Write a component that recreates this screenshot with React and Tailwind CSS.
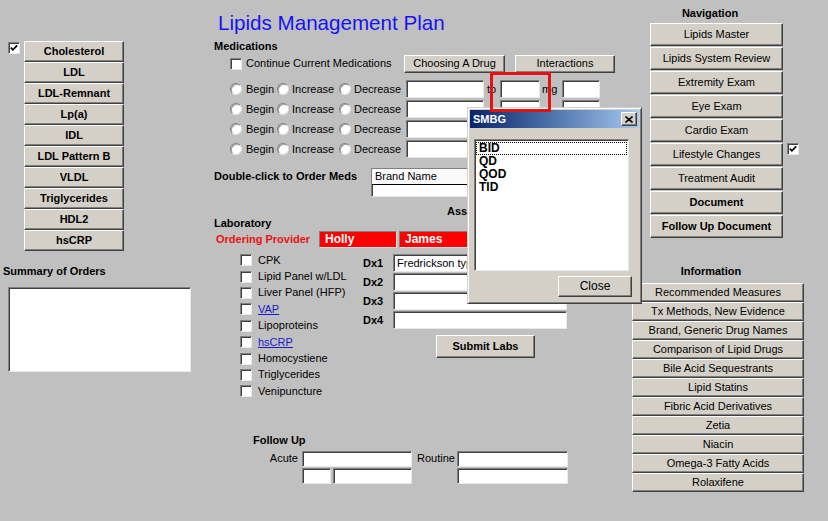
import React from "react";

const btn =
  "bg-[#d4d0c8] border border-t-white border-l-white border-r-[#404040] border-b-[#404040] shadow-[inset_-1px_-1px_0_#808080] flex items-center justify-center text-black shrink-0";
const sunken =
  "bg-white border border-t-[#808080] border-l-[#808080] border-r-[#e8e8e8] border-b-[#e8e8e8] shadow-[inset_1px_1px_0_#404040] shrink-0";

function Check({ checked }) {
  return (
    <span className={"inline-flex w-[12px] h-[12px] items-center justify-center " + sunken}>
      {checked && (
        <svg width="8" height="8" viewBox="0 0 8 8">
          <path d="M0.8 3.6 L2.9 5.8 L7.2 1.3" stroke="black" strokeWidth="1.7" fill="none" />
        </svg>
      )}
    </span>
  );
}

function Radio() {
  return (
    <span className="w-[12px] h-[12px] rounded-full bg-white border border-t-[#808080] border-l-[#808080] border-r-[#e0e0e0] border-b-[#e0e0e0] shadow-[inset_1px_1px_0_#a0a0a0] shrink-0" />
  );
}

const leftBtns = ["Cholesterol", "LDL", "LDL-Remnant", "Lp(a)", "IDL", "LDL Pattern B", "VLDL", "Triglycerides", "HDL2", "hsCRP"];
const navBtns = [
  { t: "Lipids Master" },
  { t: "Lipids System Review" },
  { t: "Extremity Exam" },
  { t: "Eye Exam" },
  { t: "Cardio Exam" },
  { t: "Lifestyle Changes", c: true },
  { t: "Treatment Audit" },
  { t: "Document", b: true },
  { t: "Follow Up Document", b: true },
];
const infoBtns = [
  "Recommended Measures",
  "Tx Methods, New Evidence",
  "Brand, Generic Drug Names",
  "Comparison of Lipid Drugs",
  "Bile Acid Sequestrants",
  "Lipid Statins",
  "Fibric Acid Derivatives",
  "Zetia",
  "Niacin",
  "Omega-3 Fatty Acids",
  "Rolaxifene",
];
const labs = [
  { t: "CPK" },
  { t: "Lipid Panel w/LDL" },
  { t: "Liver Panel (HFP)" },
  { t: "VAP", l: true },
  { t: "Lipoproteins" },
  { t: "hsCRP", l: true },
  { t: "Homocystiene" },
  { t: "Triglycerides" },
  { t: "Venipuncture" },
];

export default function App() {
  return (
    <div className="relative w-[828px] h-[521px] overflow-hidden bg-[#c0c0c0] flex font-['Liberation_Sans',Arial,sans-serif] text-[11px] leading-[13px] text-black">
      {/* Left column */}
      <div className="w-[200px] flex flex-col shrink-0">
        <div className="mt-[41px] flex items-start">
          <span className="ml-[8px] mt-[1px]">
            <Check checked />
          </span>
          <div className="ml-[4px] flex flex-col">
            {leftBtns.map((b) => (
              <div key={b} className={btn + " w-[100px] h-[21px] font-bold"}>
                {b}
              </div>
            ))}
          </div>
        </div>
        <div className="mt-[14px] ml-[3px] font-bold">Summary of Orders</div>
        <div className={sunken + " mt-[9px] ml-[8px] w-[183px] h-[85px]"} />
      </div>

      {/* Center column */}
      <div className="w-[432px] flex flex-col shrink-0">
        <div className="mt-[11px] ml-[18px] text-[20.6px] leading-[24px] text-[#1414f5]">Lipids Management Plan</div>
        <div className="mt-[5px] ml-[14px] font-bold">Medications</div>
        <div className="mt-[1px] h-[19px] flex items-center">
          <span className="ml-[30px] flex">
            <Check />
          </span>
          <span className="ml-[4px] w-[158px]">Continue Current Medications</span>
          <div className={btn + " w-[101px] h-[18px]"}>Choosing A Drug</div>
          <div className={btn + " ml-[10px] w-[100px] h-[18px]"}>Interactions</div>
        </div>
        <div className="mt-[7px] flex flex-col gap-[2px]">
          {[0, 1, 2, 3].map((i) => (
            <div key={i} className="h-[18px] flex items-center">
              <span className="ml-[30px] flex">
                <Radio />
              </span>
              <span className="ml-[4px] w-[31px]">Begin</span>
              <Radio />
              <span className="ml-[3px] w-[47px]">Increase</span>
              <Radio />
              <span className="ml-[3px] w-[52px]">Decrease</span>
              <div className={sunken + " w-[78px] h-[18px]"} />
              <span className="w-[16px] pl-[3px]">{i === 0 ? "to" : ""}</span>
              <div className={sunken + " w-[40px] h-[18px]"} />
              <span className="w-[22px] pl-[2px]">{i === 0 ? "mg" : ""}</span>
              <div className={sunken + " w-[38px] h-[18px]"} />
            </div>
          ))}
        </div>
        <div className="mt-[10px] h-[29px] flex items-start">
          <span className="ml-[14px] w-[157px] pt-[2px] font-bold">Double-click to Order Meds</span>
          <div className={sunken + " w-[229px] h-[29px] flex flex-col"}>
            <div className="h-[16px] border-b border-black bg-[#fafafa] pl-[3px] flex items-center">Brand Name</div>
          </div>
        </div>
        <div className="mt-[8px] flex items-start">
          <span className="ml-[14px] w-[233px] mt-[12px] font-bold">Laboratory</span>
          <span className="font-bold">Assessment</span>
        </div>
        <div className="mt-[1px] h-[17px] flex items-center">
          <span className="ml-[16px] w-[103px] font-bold text-[#ee1111]">Ordering Provider</span>
          <div className="w-[78px] h-[17px] bg-[#ff0000] border border-t-[#808080] border-l-[#808080] border-r-[#e0e0e0] border-b-[#e0e0e0] pl-[5px] flex items-center text-white font-bold text-[12px]">
            Holly
          </div>
          <div className="ml-[2px] w-[90px] h-[17px] bg-[#ff0000] border border-t-[#808080] border-l-[#808080] border-r-[#e0e0e0] border-b-[#e0e0e0] pl-[5px] flex items-center text-white font-bold text-[12px]">
            James
          </div>
        </div>
        <div className="mt-[4px] flex items-start">
          <div className="ml-[40px] w-[123px] flex flex-col">
            {labs.map((l) => (
              <div key={l.t} className="h-[16.4px] flex items-center">
                <Check />
                <span className={"ml-[6px] " + (l.l ? "text-[#1a1acc] underline" : "")}>{l.t}</span>
              </div>
            ))}
          </div>
          <div className="flex flex-col pt-[1.5px]">
            {["Dx1", "Dx2", "Dx3", "Dx4"].map((d, i) => (
              <div key={d} className="h-[19px] flex items-center">
                <span className="w-[30px] font-bold">{d}</span>
                <div className={sunken + " w-[174px] h-[18px] pl-[3px] flex items-center"}>
                  {i === 0 ? "Fredrickson type IIa" : ""}
                </div>
              </div>
            ))}
            <div className={btn + " mt-[5px] ml-[73px] w-[99px] h-[23px] font-bold"}>Submit Labs</div>
          </div>
        </div>
        <div className="mt-[34px] ml-[53px] font-bold">Follow Up</div>
        <div className="mt-[4px] h-[16px] flex items-center">
          <span className="w-[102px] pr-[4px] text-right">Acute</span>
          <div className={sunken + " w-[110px] h-[16px]"} />
          <span className="w-[45px] pl-[5px]">Routine</span>
          <div className={sunken + " w-[111px] h-[16px]"} />
        </div>
        <div className="mt-[1px] h-[16px] flex items-center">
          <span className="w-[102px]" />
          <div className={sunken + " w-[29px] h-[16px]"} />
          <div className={sunken + " ml-[2px] w-[79px] h-[16px]"} />
          <span className="w-[45px]" />
          <div className={sunken + " w-[111px] h-[16px]"} />
        </div>
      </div>

      {/* Right column */}
      <div className="w-[196px] flex flex-col shrink-0">
        <div className="mt-[7px] ml-[18px] w-[120px] text-center font-bold">Navigation</div>
        <div className="mt-[3px] ml-[18px] flex flex-col gap-[1px]">
          {navBtns.map((n) => (
            <div key={n.t} className="flex items-start">
              <div className={btn + " w-[133px] h-[23px] " + (n.b ? "font-bold" : "")}>{n.t}</div>
              {n.c && (
                <span className="ml-[4px] flex">
                  <Check checked />
                </span>
              )}
            </div>
          ))}
        </div>
        <div className="mt-[27px] w-[158px] text-center font-bold">Information</div>
        <div className="mt-[5px] flex flex-col">
          {infoBtns.map((b) => (
            <div key={b} className={btn + " w-[172px] h-[19px]"}>
              {b}
            </div>
          ))}
        </div>
      </div>

      {/* Red highlight overlay */}
      <div className="absolute left-[490px] top-[72px] w-[61px] h-[40px] border-[3px] border-[#e51212] z-20" />

      {/* SMBG dialog */}
      <div className="absolute left-[467px] top-[107px] w-[175px] h-[197px] bg-[#d4d0c8] border border-t-[#d4d0c8] border-l-[#d4d0c8] border-r-[#404040] border-b-[#404040] shadow-[inset_1px_1px_0_white,inset_-1px_-1px_0_#808080] p-[2px] z-10 flex flex-col">
        <div className="h-[18px] bg-linear-to-r from-[#0a246a] to-[#a6caf0] flex items-center justify-between pl-[3px] pr-[2px]">
          <span className="text-white font-bold text-[11px]">SMBG</span>
          <span className={btn + " w-[16px] h-[14px]"}>
            <svg width="8" height="7" viewBox="0 0 8 7">
              <path d="M0.5 0.5 L7.5 6.5 M7.5 0.5 L0.5 6.5" stroke="black" strokeWidth="1.6" />
            </svg>
          </span>
        </div>
        <div className={sunken + " ml-[4px] mt-[11px] w-[155px] h-[132px] pt-[2px] px-[1px] flex flex-col"}>
          <div className="h-[13px] border border-dotted border-black pl-[2px] flex items-center font-bold text-[12px]">BID</div>
          <div className="h-[13px] pl-[3px] flex items-center font-bold text-[12px]">QD</div>
          <div className="h-[13px] pl-[3px] flex items-center font-bold text-[12px]">QOD</div>
          <div className="h-[13px] pl-[3px] flex items-center font-bold text-[12px]">TID</div>
        </div>
        <div className={btn + " mt-[5px] ml-[88px] w-[74px] h-[21px] text-[12px]"}>Close</div>
      </div>
    </div>
  );
}
